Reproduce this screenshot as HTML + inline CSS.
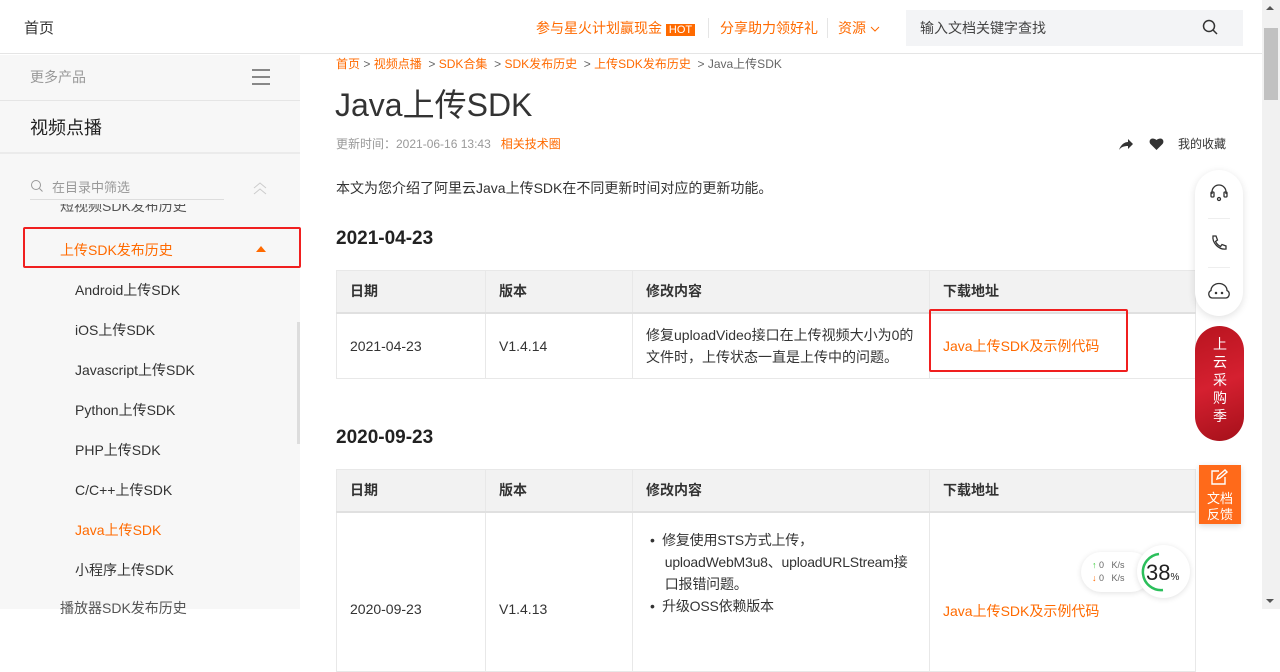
<!DOCTYPE html>
<html><head><meta charset="utf-8"><style>
*{margin:0;padding:0;box-sizing:border-box}
body{width:1280px;height:609px;overflow:hidden;background:#fff;font-family:"Liberation Sans","Noto Sans CJK SC",sans-serif;color:#333;position:relative}
.a{position:absolute;white-space:nowrap}
.or{color:#ff6a00}
table{border-collapse:collapse;position:absolute;left:336px;width:860px;font-size:14px;color:#333}
td,th{border:1px solid #e8e8e8;padding:0 13px;text-align:left;vertical-align:middle}
th{background:#f2f2f2;font-weight:bold;height:42px;border-bottom:2px solid #e0e0e0}
</style></head><body>
<!-- header -->
<div class="a" style="left:0;top:0;width:1262px;height:54px;border-bottom:1px solid #e5e5e5;background:#fff"></div>
<div class="a" style="left:24px;top:17px;font-size:15px;color:#333">首页</div>
<div class="a or" style="left:536px;top:18px;font-size:14px">参与星火计划赢现金 <span style="background:#ff6a00;color:#fff;font-size:11px;padding:0 3px">HOT</span></div>
<div class="a" style="left:708px;top:18px;width:1px;height:20px;background:#e5e5e5"></div>
<div class="a or" style="left:720px;top:18px;font-size:14px">分享助力领好礼</div>
<div class="a" style="left:827px;top:18px;width:1px;height:20px;background:#e5e5e5"></div>
<div class="a or" style="left:838px;top:18px;font-size:14px">资源 <svg width="10" height="8" viewBox="0 0 10 8"><path d="M1 2l4 4 4-4" stroke="#ff6a00" fill="none"/></svg></div>
<div class="a" style="left:906px;top:10px;width:337px;height:36px;background:#f3f4f6"></div>
<div class="a" style="left:920px;top:18px;font-size:14px;color:#444">输入文档关键字查找</div>
<svg class="a" style="left:1202px;top:19px" width="16" height="18" viewBox="0 0 16 18"><circle cx="7" cy="7" r="5.5" stroke="#333" stroke-width="1.5" fill="none"/><path d="M11 11l4 4" stroke="#333" stroke-width="1.5"/></svg>
<!-- scrollbar -->
<div class="a" style="left:1262px;top:0;width:18px;height:609px;background:#f1f1f1"></div>
<div class="a" style="left:1264px;top:28px;width:14px;height:72px;background:#c1c1c1"></div>
<div class="a" style="left:1266px;top:6px;border:4px solid transparent;border-bottom-color:#555;border-top:0"></div>
<div class="a" style="left:1266px;top:599px;border:4px solid transparent;border-top-color:#555;border-bottom:0"></div>
<!-- sidebar -->
<div class="a" style="left:0;top:55px;width:300px;height:554px;background:#f7f7f7"></div>
<div class="a" style="left:30px;top:67px;font-size:14px;color:#999">更多产品</div>
<div class="a" style="left:252px;top:69px;width:18px;height:2px;background:#888;box-shadow:0 7px 0 #888,0 14px 0 #888"></div>
<div class="a" style="left:0;top:100px;width:300px;height:1px;background:#e5e5e5"></div>
<div class="a" style="left:30px;top:114px;font-size:18px;color:#222">视频点播</div>
<div class="a" style="left:0;top:152px;width:300px;height:2px;background:#ebebeb"></div>
<svg class="a" style="left:30px;top:179px" width="13" height="14"><circle cx="6" cy="6" r="4.5" stroke="#999" fill="none"/><path d="M9.5 9.5l3 3" stroke="#999"/></svg>
<div class="a" style="left:52px;top:177px;font-size:13px;color:#999">在目录中筛选</div>
<div class="a" style="left:30px;top:199px;width:194px;height:1px;background:#ddd"></div>
<svg class="a" style="left:253px;top:181px" width="14" height="14"><path d="M1 7l6-5 6 5M1 13l6-5 6 5" stroke="#ccc" fill="none"/></svg>
<div class="a" style="left:60px;top:204px;font-size:14px;color:#555;height:12px;overflow:hidden;line-height:4px">短视频SDK发布历史</div>
<div class="a" style="left:23px;top:227px;width:278px;height:41px;border:2px solid #f01f1f;border-radius:2px"></div>
<div class="a or" style="left:60px;top:240px;font-size:14px">上传SDK发布历史</div>
<div class="a" style="left:256px;top:246px;border:5px solid transparent;border-bottom:6px solid #ff6a00;border-top:0"></div>
<div class="a" style="left:297px;top:322px;width:3px;height:122px;background:#ddd"></div>
<div class="a" style="left:75px;top:270px;font-size:14px;color:#333;line-height:40px">Android上传SDK<br>iOS上传SDK<br>Javascript上传SDK<br>Python上传SDK<br>PHP上传SDK<br>C/C++上传SDK<br><span class="or">Java上传SDK</span><br>小程序上传SDK</div>
<div class="a" style="left:60px;top:598px;font-size:14px;color:#555">播放器SDK发布历史</div>
<!-- main -->
<div class="a" style="left:336px;top:55px;font-size:12px;color:#666"><span class="or">首页</span> &gt; <span class="or">视频点播</span> &nbsp;&gt; <span class="or">SDK合集</span> &nbsp;&gt; <span class="or">SDK发布历史</span> &nbsp;&gt; <span class="or">上传SDK发布历史</span> &nbsp;&gt; Java上传SDK</div>
<div class="a" style="left:335px;top:80px;font-size:32px;color:#333">Java上传SDK</div>
<div class="a" style="left:336px;top:135px;font-size:12px;color:#999">更新时间：2021-06-16 13:43 &nbsp; <span class="or">相关技术圈</span></div>
<svg class="a" style="left:1118px;top:137px" width="16" height="14"><path d="M1 13C3 7 7 5 10 5V2l5 5-5 5V9C6 9 3 10 1 13z" fill="#333"/></svg>
<svg class="a" style="left:1149px;top:137px" width="15" height="14"><path d="M7.5 13L1.5 7C-1 4 2-1 7.5 3 13-1 16 4 13.5 7z" fill="#333"/></svg>
<div class="a" style="left:1178px;top:135px;font-size:12px;color:#333">我的收藏</div>
<div class="a" style="left:336px;top:178px;font-size:14px;color:#333">本文为您介绍了阿里云Java上传SDK在不同更新时间对应的更新功能。</div>
<div class="a" style="left:336px;top:228px;font-size:19px;font-weight:bold;color:#222">2021-04-23</div>
<table style="top:270px"><tr><th style="width:149px">日期</th><th style="width:147px">版本</th><th style="width:297px">修改内容</th><th>下载地址</th></tr>
<tr style="height:66px"><td>2021-04-23</td><td>V1.4.14</td><td style="line-height:22px">修复uploadVideo接口在上传视频大小为0的文件时，上传状态一直是上传中的问题。</td><td><span class="or">Java上传SDK及示例代码</span></td></tr></table>
<div class="a" style="left:929px;top:309px;width:199px;height:63px;border:2px solid #f01f1f;border-radius:2px"></div>
<div class="a" style="left:336px;top:427px;font-size:19px;font-weight:bold;color:#222">2020-09-23</div>
<table style="top:469px"><tr><th style="width:149px">日期</th><th style="width:147px">版本</th><th style="width:297px">修改内容</th><th>下载地址</th></tr>
<tr style="height:160px"><td style="vertical-align:top;padding-top:88px">2020-09-23</td><td style="vertical-align:top;padding-top:88px">V1.4.13</td><td style="vertical-align:top;padding:16px 0 0 17px;line-height:22px;white-space:nowrap;letter-spacing:-0.2px">•&nbsp;&nbsp;修复使用STS方式上传，<br>&nbsp;&nbsp;&nbsp;&nbsp;uploadWebM3u8、uploadURLStream接<br>&nbsp;&nbsp;&nbsp;&nbsp;口报错问题。<br>•&nbsp;&nbsp;升级OSS依赖版本</td><td style="vertical-align:top;padding-top:88px"><span class="or">Java上传SDK及示例代码</span></td></tr></table>
<!-- floating -->
<div class="a" style="left:1195px;top:170px;width:48px;height:146px;background:#fff;border-radius:24px;box-shadow:0 2px 8px rgba(0,0,0,.12)"></div>
<svg class="a" style="left:1209px;top:183px" width="20" height="20" viewBox="0 0 20 20" fill="none" stroke="#333" stroke-width="1.3"><path d="M3 11V9a7 7 0 0114 0v2"/><rect x="2" y="9" width="3" height="5" rx="1"/><rect x="15" y="9" width="3" height="5" rx="1"/><circle cx="10" cy="16" r="1.5"/></svg>
<div class="a" style="left:1208px;top:218px;width:22px;height:1px;background:#eee"></div>
<svg class="a" style="left:1210px;top:234px" width="18" height="18" viewBox="0 0 18 18" fill="none" stroke="#333" stroke-width="1.3"><path d="M3 2l3 0 1.5 4-2 1.5c1 2 3 4 5 5l1.5-2 4 1.5v3c-7 1-14-6-13-13z"/></svg>
<div class="a" style="left:1208px;top:267px;width:22px;height:1px;background:#eee"></div>
<svg class="a" style="left:1208px;top:282px" width="22" height="18" viewBox="0 0 22 18" fill="none" stroke="#333" stroke-width="1.3"><path d="M4 16a4 4 0 01-1-7.5A8 7 0 0119 8.5 4 4 0 0118 16z"/><circle cx="8" cy="11" r=".6" fill="#333"/><circle cx="14" cy="11" r=".6" fill="#333"/></svg>
<div class="a" style="left:1195px;top:326px;width:49px;height:115px;background:linear-gradient(160deg,#b8141f,#d52030 50%,#a5101a);border-radius:25px"></div>
<div class="a" style="left:1212px;top:335px;font-size:14px;color:#fff;line-height:18px;width:16px;white-space:normal;text-align:center">上云采购季</div>
<div class="a" style="left:1199px;top:465px;width:42px;height:59px;background:#ff6a1a;box-shadow:0 2px 6px rgba(0,0,0,.15)"></div>
<svg class="a" style="left:1210px;top:469px" width="18" height="17" viewBox="0 0 18 17" fill="none" stroke="#fff" stroke-width="1.4"><path d="M9 2H2v13h13V8"/><path d="M7 10l1-3 7-6 2 2-7 6z"/></svg>
<div class="a" style="left:1207px;top:491px;font-size:13px;color:#fff;line-height:16px">文档<br>反馈</div>
<div class="a" style="left:1081px;top:552px;width:70px;height:40px;background:#fff;border-radius:20px;box-shadow:0 1px 6px rgba(0,0,0,.12)"></div>
<div class="a" style="left:1092px;top:559px;font-size:9px;color:#666;line-height:13px"><span style="color:#3c3">↑</span> 0 &nbsp;&nbsp;K/s<br><span class="or">↓</span> 0 &nbsp;&nbsp;K/s</div>
<div class="a" style="left:1137px;top:545px;width:53px;height:53px;background:#fff;border-radius:50%;box-shadow:0 1px 6px rgba(0,0,0,.12)"></div>
<svg class="a" style="left:1137px;top:545px" width="53" height="53"><path d="M22 9A18 18 0 0026 45" stroke="#2bbf5b" stroke-width="2.5" fill="none"/></svg>
<div class="a" style="left:1146px;top:560px;font-size:22px;color:#222">38<span style="font-size:10px">%</span></div>
</body></html>
